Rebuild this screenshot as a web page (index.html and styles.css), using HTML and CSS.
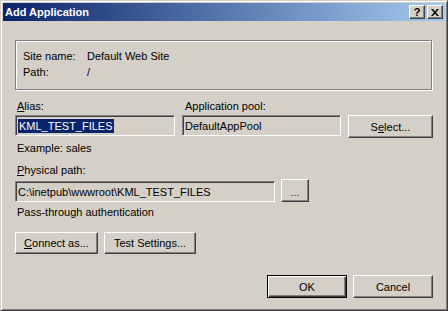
FILE: index.html
```html
<!DOCTYPE html>
<html lang="en">
<head>
    <meta charset="UTF-8">
    <title>Add Application</title>
    <link rel="stylesheet" href="styles.css">
</head>
<body>
    <div class="window">
        <div class="titlebar">
            <span class="title">Add Application</span>
            <div class="caption-buttons">
                <span class="cap-btn help">?</span>
                <span class="cap-btn close">
                    <svg width="8" height="7" viewBox="0 0 8 7"><path d="M0 0h2l2 2.5L6 0h2L5 3.5 8 7H6L4 4.5 2 7H0l3-3.5z" fill="#000"/></svg>
                </span>
            </div>
        </div>

        <div class="content">
            <div class="groupbox">
                <div class="info-row"><span>Site name:</span><span>Default Web Site</span></div>
                <div class="info-row"><span>Path:</span><span>/</span></div>
            </div>

            <div class="alias-grid">
                <label class="field-label"><u>A</u>lias:</label>
                <label class="field-label pool-label">Application pool:</label>
                <span></span>
                <div class="textbox"><span class="selected">KML_TEST_FILES</span></div>
                <div class="textbox">DefaultAppPool</div>
                <button class="btn select-btn">S<u>e</u>lect...</button>
            </div>

            <div class="hint">Example: sales</div>

            <label class="field-label path-label"><u>P</u>hysical path:</label>
            <div class="path-row">
                <div class="textbox path-box">C:\inetpub\wwwroot\KML_TEST_FILES</div>
                <button class="btn browse-btn">...</button>
            </div>

            <div class="hint">Pass-through authentication</div>

            <div class="button-row">
                <button class="btn connect-btn"><u>C</u>onnect as...</button>
                <button class="btn test-btn">Test Settings...</button>
            </div>

            <div class="footer">
                <button class="btn default-btn">OK</button>
                <button class="btn">Cancel</button>
            </div>
        </div>
    </div>
</body>
</html>
```

FILE: styles.css
```css
body {
    margin: 0;
    font-family: 'Liberation Sans', Arial, sans-serif;
    font-size: 11px;
    color: #000;
    background: #d4d0c8;
}
.window {
    width: 448px;
    height: 311px;
    box-sizing: border-box;
    padding: 2px;
    background: #d4d0c8;
    border: 1px solid;
    border-color: #d4d0c8 #404040 #404040 #d4d0c8;
    box-shadow: inset 1px 1px 0 #fff, inset -1px -1px 0 #808080;
}
.titlebar {
    height: 18px;
    display: flex;
    align-items: center;
    justify-content: space-between;
    padding: 0 2px;
    background: linear-gradient(to right, #0a246a, #a6caf0);
}
.title {
    color: #fff;
    font-weight: bold;
    font-size: 11px;
}
.caption-buttons {
    display: flex;
    gap: 2px;
}
.cap-btn {
    width: 16px;
    height: 14px;
    box-sizing: border-box;
    display: flex;
    align-items: center;
    justify-content: center;
    background: #d4d0c8;
    border: 1px solid;
    border-color: #fff #404040 #404040 #fff;
    box-shadow: inset -1px -1px 0 #808080;
    font-weight: bold;
    font-size: 11px;
    line-height: 1;
}
.content {
    padding: 0 12px;
}
.groupbox {
    margin-top: 19px;
    height: 50px;
    width: 417px;
    box-sizing: border-box;
    padding: 9px 7px 0;
    border: 1px solid #808080;
    box-shadow: inset 1px 1px 0 #fff, 1px 1px 0 #fff;
}
.info-row {
    display: grid;
    grid-template-columns: 64px 1fr;
    height: 16px;
    line-height: 13px;
}
.alias-grid {
    margin-top: 10px;
    display: grid;
    grid-template-columns: 160px 159px 85px;
    column-gap: 7px;
    row-gap: 2px;
    align-items: start;
}
.field-label {
    display: block;
    line-height: 13px;
    padding-left: 2px;
}
.pool-label {
    padding-left: 3px;
}
.textbox {
    height: 21px;
    box-sizing: border-box;
    padding: 0 2px;
    display: flex;
    align-items: center;
    white-space: nowrap;
    overflow: hidden;
    background: #d4d0c8;
    border: 1px solid;
    border-color: #808080 #fff #fff #808080;
    box-shadow: inset 1px 1px 0 #404040, inset -1px -1px 0 #d4d0c8;
}
.selected {
    background: #0a246a;
    color: #fff;
    line-height: 14px;
    padding: 0 1px;
}
.btn {
    font-family: inherit;
    font-size: 11px;
    color: #000;
    height: 22px;
    padding: 0;
    background: #d4d0c8;
    border: 1px solid;
    border-color: #fff #404040 #404040 #fff;
    box-shadow: inset -1px -1px 0 #808080;
    border-radius: 0;
}
.select-btn {
    height: 23px;
}
.hint {
    margin-top: 4px;
    line-height: 13px;
    padding-left: 2px;
}
.path-label {
    margin-top: 9px;
}
.path-row {
    margin-top: 2px;
    display: flex;
    align-items: flex-end;
    gap: 6px;
}
.path-box {
    width: 260px;
}
.browse-btn {
    width: 28px;
    height: 23px;
    color: #404040;
    line-height: 1;
    padding-top: 4px;
}
.button-row {
    margin-top: 13px;
    display: flex;
    gap: 6px;
}
.connect-btn {
    width: 83px;
}
.test-btn {
    width: 92px;
}
.footer {
    margin-top: 21px;
    display: flex;
    justify-content: flex-end;
    gap: 6px;
}
.footer .btn {
    width: 80px;
    height: 23px;
}
.footer .default-btn {
    border: 1px solid #000;
    box-shadow: inset 1px 1px 0 #fff, inset -1px -1px 0 #404040, inset -2px -2px 0 #808080;
}
```
